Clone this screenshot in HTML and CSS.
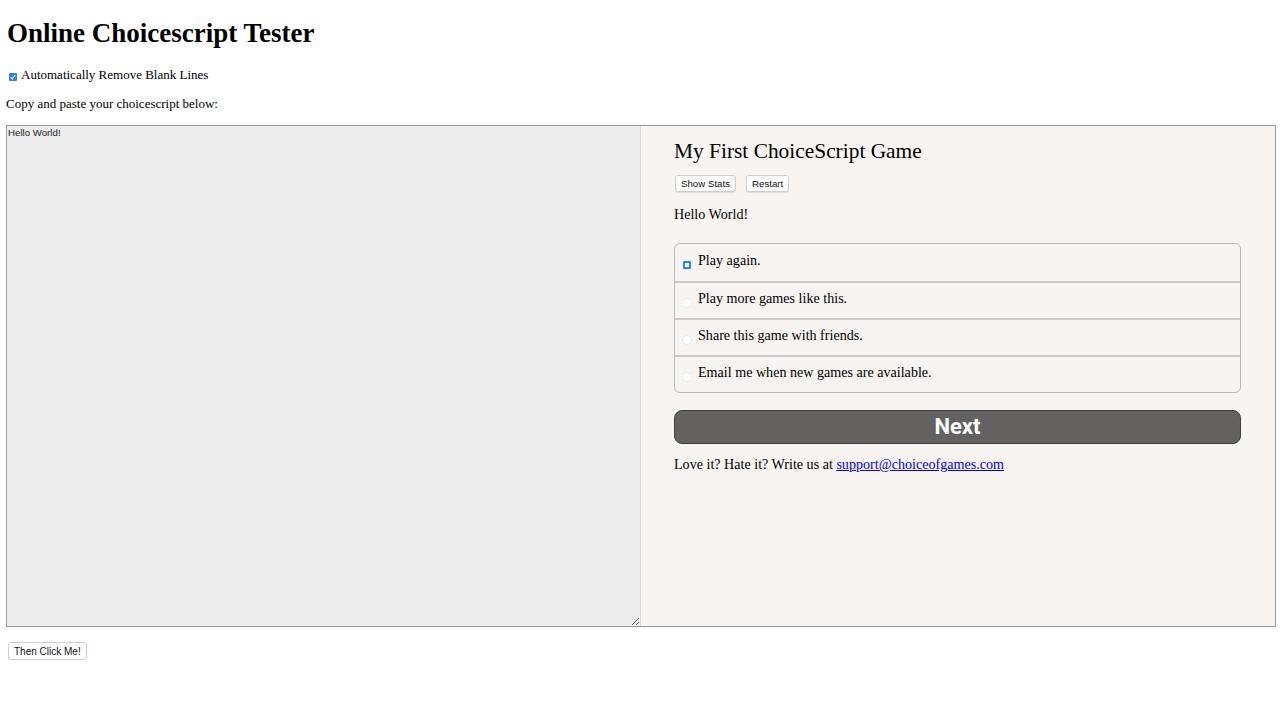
FILE: index.html
```html
<!DOCTYPE html>
<html>
<head>
<meta charset="utf-8">
<title>Online Choicescript Tester</title>
<link rel="stylesheet" href="styles.css">
</head>
<body>
<h1 class="title">Online Choicescript Tester</h1>
<div class="opt"><span class="cb"><svg width="8" height="8" viewBox="0 0 8 8"><rect x="0" y="0" width="8" height="8" rx="1" fill="#2d7ff0"/><path d="M1.8 4.2 L3.3 5.8 L6.2 2.2" stroke="#fff" stroke-width="1.2" fill="none"/></svg></span><span>Automatically Remove Blank Lines</span></div>
<p class="intro">Copy and paste your choicescript below:</p>
<div class="frame">
  <textarea class="editor">Hello World!</textarea>
  <div class="game">
    <h2 class="gtitle">My First ChoiceScript Game</h2>
    <div class="gbtns"><button class="sbtn">Show Stats</button><button class="sbtn">Restart</button></div>
    <p class="gtext">Hello World!</p>
    <div class="choices">
      <div class="choice"><span class="radio on"></span><span>Play again.</span></div>
      <div class="choice"><span class="radio"></span><span>Play more games like this.</span></div>
      <div class="choice"><span class="radio"></span><span>Share this game with friends.</span></div>
      <div class="choice"><span class="radio"></span><span>Email me when new games are available.</span></div>
    </div>
    <button class="next">Next</button>
    <p class="foot">Love it? Hate it? Write us at <a href="#">support@choiceofgames.com</a></p>
  </div>
</div>
<button class="sbtn go">Then Click Me!</button>
</body>
</html>
```

FILE: styles.css
```css
html, body { margin: 0; padding: 0; background: #fff; }
body { padding: 0 6px; font-family: "Liberation Serif", "Times New Roman", serif; color: #000; }
.title { font-size: 27px; font-weight: bold; margin: 0; padding-top: 17px; line-height: 32px; padding-left: 1px; }
.opt { display: flex; align-items: center; gap: 4px; margin-top: 18px; font-size: 13px; line-height: 15px; padding-left: 3px; }
.cb { display: inline-flex; margin-top: 4px; }
.intro { font-size: 13px; margin: 14px 0 0 0; line-height: 15px; }
.frame { display: flex; margin-top: 14px; border: 1px solid #9a9a9a; height: 500px; width: 1268px; }
.editor { width: 634px; height: 500px; box-sizing: border-box; margin: 0; padding: 1px 1px; border: none; border-right: 1px solid #d6d6d6; background: #ededed; font-family: "Liberation Sans", Arial, sans-serif; font-size: 9.7px; line-height: 11px; color: #222; resize: both; outline: none; }
.game { flex: 1; background: #f7f4f1; padding: 0 34px 0 33px; font-family: "Liberation Serif", Georgia, serif; }
.gtitle { font-weight: normal; font-size: 21.4px; margin: 14px 0 0 0; line-height: 22px; }
.gbtns { display: flex; gap: 10px; margin-top: 13px; padding-left: 1px; }
.sbtn { font-family: "Liberation Sans", Arial, sans-serif; font-size: 9.7px; background: #fff; border: 1px solid #cfcfcf; border-radius: 3px; padding: 0 5px; height: 17px; line-height: 15px; color: #111; box-shadow: 0 1px 1px rgba(0,0,0,0.08); }
.gtext { font-size: 14.1px; margin: 14px 0 0 0; line-height: 16px; }
.choices { margin-top: 21px; border: 1px solid #b8b8b8; border-radius: 6px; overflow: hidden; }
.choice { display: flex; align-items: center; height: 37px; border-top: 2px solid #cbcbcb; font-size: 14.1px; padding-left: 8px; gap: 7px; box-sizing: border-box; }
.choice:first-child { border-top: none; }
.choice span:last-child { margin-top: -4px; }
.radio { width: 8px; height: 8px; border-radius: 50%; background: #fff; box-shadow: 0 0 0 0.5px #e0e0e0; margin-top: 5px; }
.radio.on { border-radius: 1px; background: #fff; border: 2px solid #2d86f5; width: 4px; height: 4px; }
.next { display: block; width: 100%; margin-top: 17px; height: 34px; background: #636260; border: 1px solid #3f3f3f; border-radius: 8px; color: #fff; font-family: Roboto, "Liberation Sans", sans-serif; font-weight: bold; font-size: 22px; line-height: 30px; padding: 0; }
.foot { font-size: 14.1px; margin: 12px 0 0 0; line-height: 16px; }
.foot a { color: #0000ee; }
.go { margin-top: 15px; margin-left: 2px; height: 18px; display: block; font-size: 10px; }
```
